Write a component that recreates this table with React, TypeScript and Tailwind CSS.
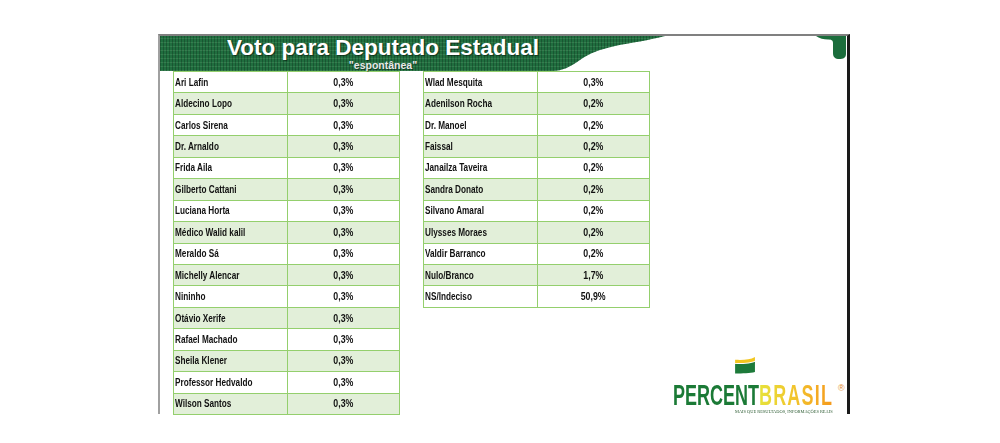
import React from 'react';

const left = [
  ['Ari Lafin', '0,3%'],
  ['Aldecino Lopo', '0,3%'],
  ['Carlos Sirena', '0,3%'],
  ['Dr. Arnaldo', '0,3%'],
  ['Frida Aila', '0,3%'],
  ['Gilberto Cattani', '0,3%'],
  ['Luciana Horta', '0,3%'],
  ['Médico Walid kalil', '0,3%'],
  ['Meraldo Sá', '0,3%'],
  ['Michelly Alencar', '0,3%'],
  ['Nininho', '0,3%'],
  ['Otávio Xerife', '0,3%'],
  ['Rafael Machado', '0,3%'],
  ['Sheila Klener', '0,3%'],
  ['Professor Hedvaldo', '0,3%'],
  ['Wilson Santos', '0,3%'],
];

const right = [
  ['Wlad Mesquita', '0,3%'],
  ['Adenilson Rocha', '0,2%'],
  ['Dr. Manoel', '0,2%'],
  ['Faissal', '0,2%'],
  ['Janailza Taveira', '0,2%'],
  ['Sandra Donato', '0,2%'],
  ['Silvano Amaral', '0,2%'],
  ['Ulysses Moraes', '0,2%'],
  ['Valdir Barranco', '0,2%'],
  ['Nulo/Branco', '1,7%'],
  ['NS/Indeciso', '50,9%'],
];

function VoteTable({ rows }: { rows: string[][] }) {
  return (
    <div className="flex flex-col border-l border-t border-[#94cf6d] w-[227px]">
      {rows.map(([name, pct], i) => (
        <div key={name} className={`flex h-[21.45px] ${i % 2 === 1 ? 'bg-[#e2efd9]' : 'bg-white'}`}>
          <div className="w-[114px] flex items-center pl-[1px] border-r border-b border-[#94cf6d] overflow-visible whitespace-nowrap">
            <span className="inline-block origin-left scale-x-[0.82] text-[10px] font-bold text-[#111]">{name}</span>
          </div>
          <div className="w-[113px] flex items-center justify-center border-r border-b border-[#94cf6d] whitespace-nowrap">
            <span className="inline-block scale-x-[0.88] text-[10px] font-bold text-[#111]">{pct}</span>
          </div>
        </div>
      ))}
    </div>
  );
}

export default function App() {
  return (
    <div className="w-[1000px] h-[443px] bg-white overflow-hidden font-['Liberation_Sans',Arial,sans-serif]">
      {/* moldura do slide */}
      <div className="relative ml-[158px] mt-[34px] w-[692px] h-[380px] border-l-2 border-t-2 border-r-[3px] border-l-[#a0a0a0] border-t-[#808080] border-r-[#1a1a1a]">

        {/* pingo verde do canto */}
        <svg className="absolute top-0 right-[1px]" width="30" height="24" viewBox="0 0 30 24">
          <path d="M0,0 H30 V18 C30,22 27,23 23.5,23 C19,23 17,21 17,17 V7 C17,4 15,3.5 12,3.5 C8,3.5 3,2.5 0,0 Z" fill="#1b6d3c" />
        </svg>

        {/* faixa do título */}
        <div className="relative h-[35px] w-[505px]">
          <div className="absolute inset-0 bg-[#206e3f] [clip-path:path('M0,0_L505,0_C490,4_470,7_455,10_C438,14_430,17_420,24_C410,31_402,35_393,35_L0,35_Z')] bg-[repeating-linear-gradient(90deg,rgba(0,0,0,0.22)_0px,rgba(0,0,0,0.22)_1px,transparent_1px,transparent_3px),repeating-linear-gradient(0deg,rgba(140,200,150,0.18)_0px,rgba(140,200,150,0.18)_1px,transparent_1px,transparent_4px)]"></div>
          <div className="relative w-[446px] flex flex-col items-center">
            <h1 className="text-[22.5px] leading-[23px] font-bold text-white [text-shadow:1px_1px_1px_rgba(0,0,0,0.5)] whitespace-nowrap">
              Voto para Deputado Estadual
            </h1>
            <p className="mt-[1px] text-[10.5px] leading-[10px] font-bold text-[#e8e8e8] [text-shadow:1px_1px_0_rgba(0,0,0,0.4)]">"espontânea"</p>
          </div>
        </div>

        {/* tabelas e logo */}
        <div className="flex items-stretch pl-[13px] gap-[23px]">
          <VoteTable rows={left} />
          <div className="self-start">
            <VoteTable rows={right} />
          </div>

          <div className="flex flex-col justify-end">
            <div className="flex flex-col w-[170px]">
              <svg className="ml-[62px]" width="21" height="17" viewBox="0 0 22 18">
                <path d="M0,3 C8,3.5 16,3 21,0 L21,4 C16,6.5 8,6.5 0,6.5 Z" fill="#f2c61f" />
                <path d="M0,7.5 C8,7.5 16,7.5 21,5 L21,16 C16,17.5 8,17.5 0,17.5 Z" fill="#1d7a3a" />
              </svg>
              <div className="relative h-[28px] mt-[7px] whitespace-nowrap">
                <span className="absolute left-0 top-0 inline-block origin-left scale-x-[0.62] text-[29px] leading-none font-bold">
                  <span className="text-[#1b7a36]">PERCENT</span>
                  <span className="tracking-[2px] bg-linear-to-r from-[#e6e23a] via-[#f2c22c] to-[#f5981c] bg-clip-text text-transparent">BRASIL</span>
                </span>
                <span className="absolute left-[165px] top-[3px] text-[9px] leading-none text-[#e08a2a]">®</span>
              </div>
              <p className="ml-[62px] inline-block origin-left scale-x-[0.88] text-[5px] leading-[6px] font-['Liberation_Serif',serif] text-[#2a5a30] whitespace-nowrap">
                MAIS QUE RESULTADOS, INFORMAÇÕES REAIS
              </p>
            </div>
          </div>
        </div>
      </div>
    </div>
  );
}
